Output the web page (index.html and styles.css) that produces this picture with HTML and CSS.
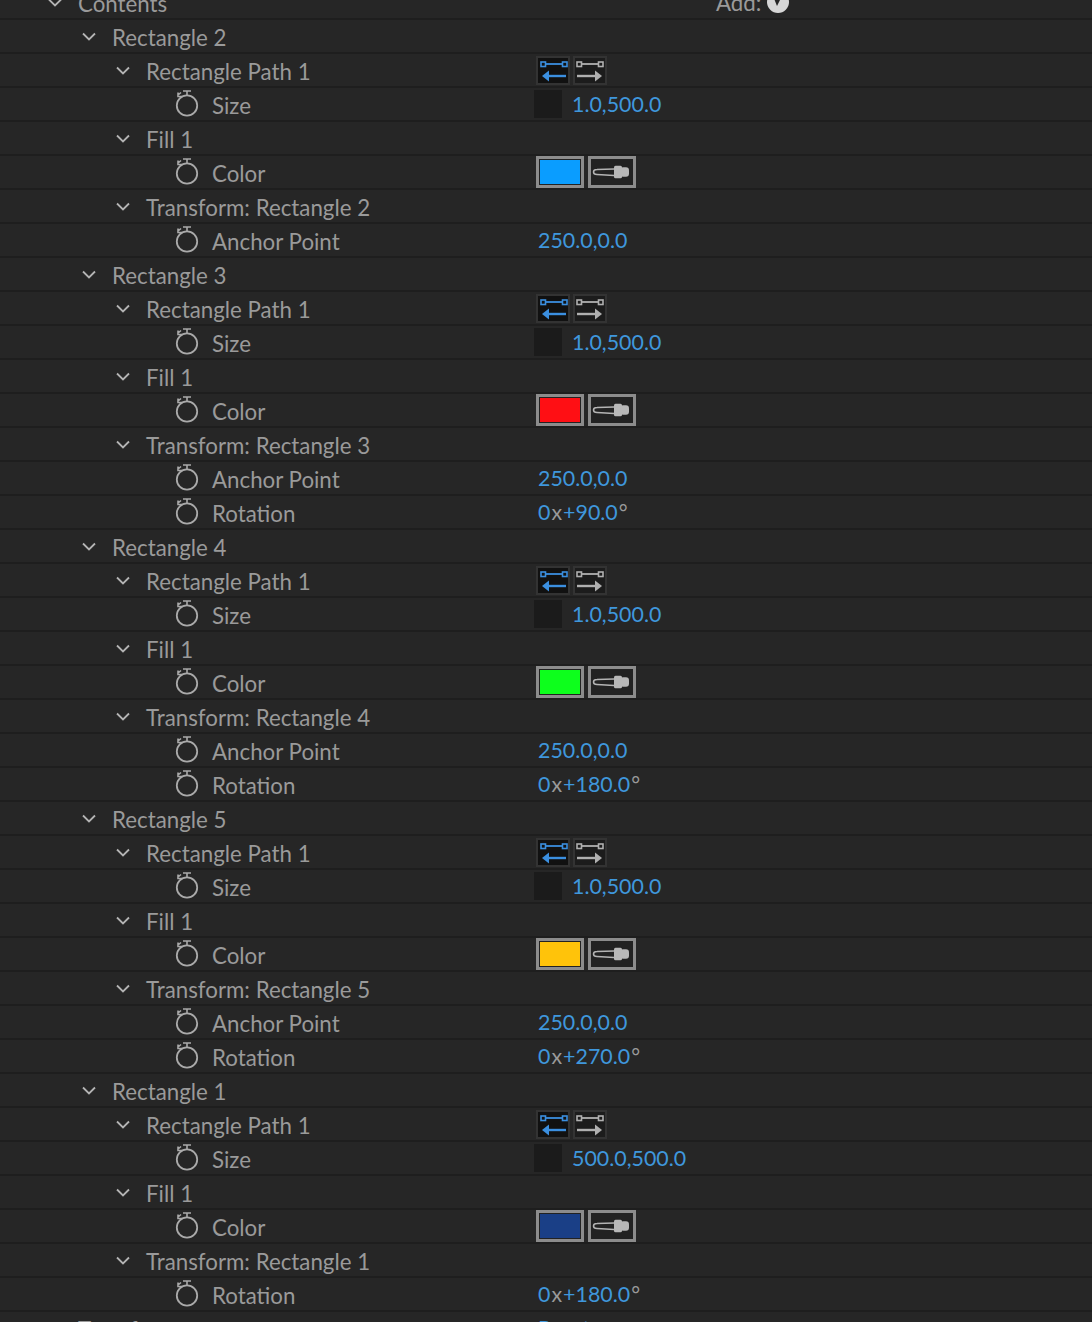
FILE: index.html
```html
<!DOCTYPE html>
<html lang="en">
<head>
  <meta charset="UTF-8" />
  <title>Contents</title>
  <link rel="stylesheet" href="styles.css">
</head>
<body>
  <svg class="defs" aria-hidden="true">
    <symbol id="chev" viewBox="0 0 14 9"><path d="M1 1.5 L7 7.5 L13 1.5" fill="none" stroke="#b4b4b4" stroke-width="1.8"/></symbol>
    <symbol id="watch" viewBox="0 0 24 28">
      <circle cx="12" cy="15.5" r="10.2" fill="none" stroke="#aaa" stroke-width="1.8"/>
      <path d="M8 1 H16 M12 1 V5 M2.5 5.5 L6 2.5 M3 2.5 V6.5 H7" fill="none" stroke="#aaa" stroke-width="1.6"/>
    </symbol>
    <symbol id="path-a" viewBox="0 0 34 29">
      <path d="M7 8 H29" stroke="#3b8fe0" stroke-width="1.800"/>
      <rect x="5" y="6" width="4.500" height="4.500" fill="#111" stroke="#3b8fe0" stroke-width="1.600"/>
      <rect x="26.500" y="6" width="4.500" height="4.500" fill="#111" stroke="#3b8fe0" stroke-width="1.600"/>
      <path d="M12 20 H30" stroke="#3b8fe0" stroke-width="2.400"/>
      <path d="M6 20 L13 14.500 V25.500 Z" fill="#3b8fe0"/>
    </symbol>
    <symbol id="path-b" viewBox="0 0 34 29">
      <path d="M5 8 H28" stroke="#b0b0b0" stroke-width="1.800"/>
      <rect x="4" y="6" width="4.500" height="4.500" fill="#1c1c1c" stroke="#b0b0b0" stroke-width="1.600"/>
      <rect x="25.500" y="6" width="4.500" height="4.500" fill="#1c1c1c" stroke="#b0b0b0" stroke-width="1.600"/>
      <path d="M4 20 H23" stroke="#b0b0b0" stroke-width="2.400"/>
      <path d="M29 20 L22 14.500 V25.500 Z" fill="#b0b0b0"/>
    </symbol>
    <symbol id="dropper" viewBox="0 0 42 26">
      <path d="M23 10 L6 10.500 Q2.500 10.500 2.500 13 Q2.500 15.500 6 15.500 L23 16.500" fill="none" stroke="#b4b4b4" stroke-width="1.500"/>
      <rect x="23" y="6.700" width="8" height="12.600" rx="1.500" fill="#b8b8b8"/>
      <rect x="29" y="8.300" width="9" height="9.400" rx="3" fill="#b8b8b8"/>
    </symbol>
  </svg>

  <div class="list">
    <div class="row"><div class="name l0"><svg class="chev"><use href="#chev"/></svg>Contents</div><div class="add">Add:<svg class="add-menu" viewBox="0 0 22 22"><circle cx="11" cy="11" r="11" fill="#d6d6d6"/><path d="M6 5 H15 L10 15 Z" fill="#262626"/></svg></div></div>

    <div class="row"><div class="name l1"><svg class="chev"><use href="#chev"/></svg>Rectangle 2</div></div>
    <div class="row"><div class="name l2"><svg class="chev"><use href="#chev"/></svg>Rectangle Path 1</div><div class="val"><span class="dir on"><svg><use href="#path-a"/></svg></span><span class="dir"><svg><use href="#path-b"/></svg></span></div></div>
    <div class="row"><div class="name l3"><svg class="watch"><use href="#watch"/></svg>Size</div><div class="val"><span class="link-box"></span><span class="num">1.0,500.0</span></div></div>
    <div class="row"><div class="name l2"><svg class="chev"><use href="#chev"/></svg>Fill 1</div></div>
    <div class="row"><div class="name l3"><svg class="watch"><use href="#watch"/></svg>Color</div><div class="val"><span class="swatch"><i class="blue"></i></span><span class="picker"><svg><use href="#dropper"/></svg></span></div></div>
    <div class="row"><div class="name l2"><svg class="chev"><use href="#chev"/></svg>Transform: Rectangle 2</div></div>
    <div class="row"><div class="name l3"><svg class="watch"><use href="#watch"/></svg>Anchor Point</div><div class="val"><span class="num">250.0,0.0</span></div></div>

    <div class="row"><div class="name l1"><svg class="chev"><use href="#chev"/></svg>Rectangle 3</div></div>
    <div class="row"><div class="name l2"><svg class="chev"><use href="#chev"/></svg>Rectangle Path 1</div><div class="val"><span class="dir on"><svg><use href="#path-a"/></svg></span><span class="dir"><svg><use href="#path-b"/></svg></span></div></div>
    <div class="row"><div class="name l3"><svg class="watch"><use href="#watch"/></svg>Size</div><div class="val"><span class="link-box"></span><span class="num">1.0,500.0</span></div></div>
    <div class="row"><div class="name l2"><svg class="chev"><use href="#chev"/></svg>Fill 1</div></div>
    <div class="row"><div class="name l3"><svg class="watch"><use href="#watch"/></svg>Color</div><div class="val"><span class="swatch"><i class="red"></i></span><span class="picker"><svg><use href="#dropper"/></svg></span></div></div>
    <div class="row"><div class="name l2"><svg class="chev"><use href="#chev"/></svg>Transform: Rectangle 3</div></div>
    <div class="row"><div class="name l3"><svg class="watch"><use href="#watch"/></svg>Anchor Point</div><div class="val"><span class="num">250.0,0.0</span></div></div>
    <div class="row"><div class="name l3"><svg class="watch"><use href="#watch"/></svg>Rotation</div><div class="val"><span class="num">0<em>x</em>+90.0<em>°</em></span></div></div>

    <div class="row"><div class="name l1"><svg class="chev"><use href="#chev"/></svg>Rectangle 4</div></div>
    <div class="row"><div class="name l2"><svg class="chev"><use href="#chev"/></svg>Rectangle Path 1</div><div class="val"><span class="dir on"><svg><use href="#path-a"/></svg></span><span class="dir"><svg><use href="#path-b"/></svg></span></div></div>
    <div class="row"><div class="name l3"><svg class="watch"><use href="#watch"/></svg>Size</div><div class="val"><span class="link-box"></span><span class="num">1.0,500.0</span></div></div>
    <div class="row"><div class="name l2"><svg class="chev"><use href="#chev"/></svg>Fill 1</div></div>
    <div class="row"><div class="name l3"><svg class="watch"><use href="#watch"/></svg>Color</div><div class="val"><span class="swatch"><i class="green"></i></span><span class="picker"><svg><use href="#dropper"/></svg></span></div></div>
    <div class="row"><div class="name l2"><svg class="chev"><use href="#chev"/></svg>Transform: Rectangle 4</div></div>
    <div class="row"><div class="name l3"><svg class="watch"><use href="#watch"/></svg>Anchor Point</div><div class="val"><span class="num">250.0,0.0</span></div></div>
    <div class="row"><div class="name l3"><svg class="watch"><use href="#watch"/></svg>Rotation</div><div class="val"><span class="num">0<em>x</em>+180.0<em>°</em></span></div></div>

    <div class="row"><div class="name l1"><svg class="chev"><use href="#chev"/></svg>Rectangle 5</div></div>
    <div class="row"><div class="name l2"><svg class="chev"><use href="#chev"/></svg>Rectangle Path 1</div><div class="val"><span class="dir on"><svg><use href="#path-a"/></svg></span><span class="dir"><svg><use href="#path-b"/></svg></span></div></div>
    <div class="row"><div class="name l3"><svg class="watch"><use href="#watch"/></svg>Size</div><div class="val"><span class="link-box"></span><span class="num">1.0,500.0</span></div></div>
    <div class="row"><div class="name l2"><svg class="chev"><use href="#chev"/></svg>Fill 1</div></div>
    <div class="row"><div class="name l3"><svg class="watch"><use href="#watch"/></svg>Color</div><div class="val"><span class="swatch"><i class="yellow"></i></span><span class="picker"><svg><use href="#dropper"/></svg></span></div></div>
    <div class="row"><div class="name l2"><svg class="chev"><use href="#chev"/></svg>Transform: Rectangle 5</div></div>
    <div class="row"><div class="name l3"><svg class="watch"><use href="#watch"/></svg>Anchor Point</div><div class="val"><span class="num">250.0,0.0</span></div></div>
    <div class="row"><div class="name l3"><svg class="watch"><use href="#watch"/></svg>Rotation</div><div class="val"><span class="num">0<em>x</em>+270.0<em>°</em></span></div></div>

    <div class="row"><div class="name l1"><svg class="chev"><use href="#chev"/></svg>Rectangle 1</div></div>
    <div class="row"><div class="name l2"><svg class="chev"><use href="#chev"/></svg>Rectangle Path 1</div><div class="val"><span class="dir on"><svg><use href="#path-a"/></svg></span><span class="dir"><svg><use href="#path-b"/></svg></span></div></div>
    <div class="row"><div class="name l3"><svg class="watch"><use href="#watch"/></svg>Size</div><div class="val"><span class="link-box"></span><span class="num">500.0,500.0</span></div></div>
    <div class="row"><div class="name l2"><svg class="chev"><use href="#chev"/></svg>Fill 1</div></div>
    <div class="row"><div class="name l3"><svg class="watch"><use href="#watch"/></svg>Color</div><div class="val"><span class="swatch"><i class="navy"></i></span><span class="picker"><svg><use href="#dropper"/></svg></span></div></div>
    <div class="row"><div class="name l2"><svg class="chev"><use href="#chev"/></svg>Transform: Rectangle 1</div></div>
    <div class="row"><div class="name l3"><svg class="watch"><use href="#watch"/></svg>Rotation</div><div class="val"><span class="num">0<em>x</em>+180.0<em>°</em></span></div></div>

    <div class="row"><div class="name l0 plain">Transform</div><div class="val"><span class="num">Reset</span></div></div>
  </div>
</body>
</html>
```

FILE: styles.css
```css
html, body {
  height: 100%;
}

body {
  margin: 0;
  background: #262626;
  color: #9a9a9a;
  font-family: "Lato", "Liberation Sans", sans-serif;
  font-size: 22.3px;
  overflow: hidden;
}

.defs {
  display: none;
}

.list {
  margin-top: -14px;
}

.row {
  display: flex;
  align-items: center;
  box-sizing: border-box;
  height: 34px;
  border-bottom: 2px solid #1e1e1e;
}

.name {
  display: flex;
  align-items: center;
  box-sizing: border-box;
  width: 534px;
  flex: none;
  padding-top: 2px;
  white-space: nowrap;
}

.l0 { padding-left: 48px; }
.l1 { padding-left: 82px; }
.l2 { padding-left: 116px; }
.l3 { padding-left: 175px; }
.plain { padding-left: 78px; }

.chev {
  width: 14px;
  height: 9px;
  margin-right: 16px;
  margin-bottom: 2px;
  flex: none;
}

.watch {
  width: 24px;
  height: 28px;
  margin-right: 13px;
  margin-bottom: 2px;
  flex: none;
}

.val {
  display: flex;
  align-items: center;
  color: #3f97dc;
  font-size: 21.4px;
}

.num {
  padding-left: 4px;
}

.num em {
  font-style: normal;
  color: #9a9a9a;
  margin-left: 1px;
  margin-right: 1px;
}

.link-box {
  width: 28px;
  height: 28px;
  margin-right: 6px;
  background: #1b1b1b;
}

.dir {
  box-sizing: border-box;
  width: 34px;
  height: 29px;
  margin-left: 2px;
  margin-right: 1px;
  background: #1c1c1c;
  border: 2px solid #333;
}

.dir.on {
  background: #111;
}

.dir svg {
  display: block;
  width: 34px;
  height: 29px;
  margin: -2px;
}

.swatch, .picker {
  box-sizing: border-box;
  width: 48px;
  height: 32px;
  border: 3px solid #8c8c8c;
  background: #222;
}

.swatch {
  margin-left: 2px;
  margin-right: 4px;
  padding: 1px;
}

.swatch i {
  display: block;
  height: 100%;
}

.blue { background: #0a9dff; }
.red { background: #ff0f14; }
.green { background: #0dff1c; }
.yellow { background: #ffc30a; }
.navy { background: #1a3f86; }

.picker svg {
  display: block;
  width: 42px;
  height: 26px;
}

.add {
  display: flex;
  align-items: center;
  margin-left: 182px;
}

.add-menu {
  width: 22px;
  height: 22px;
  margin-left: 6px;
}
```
